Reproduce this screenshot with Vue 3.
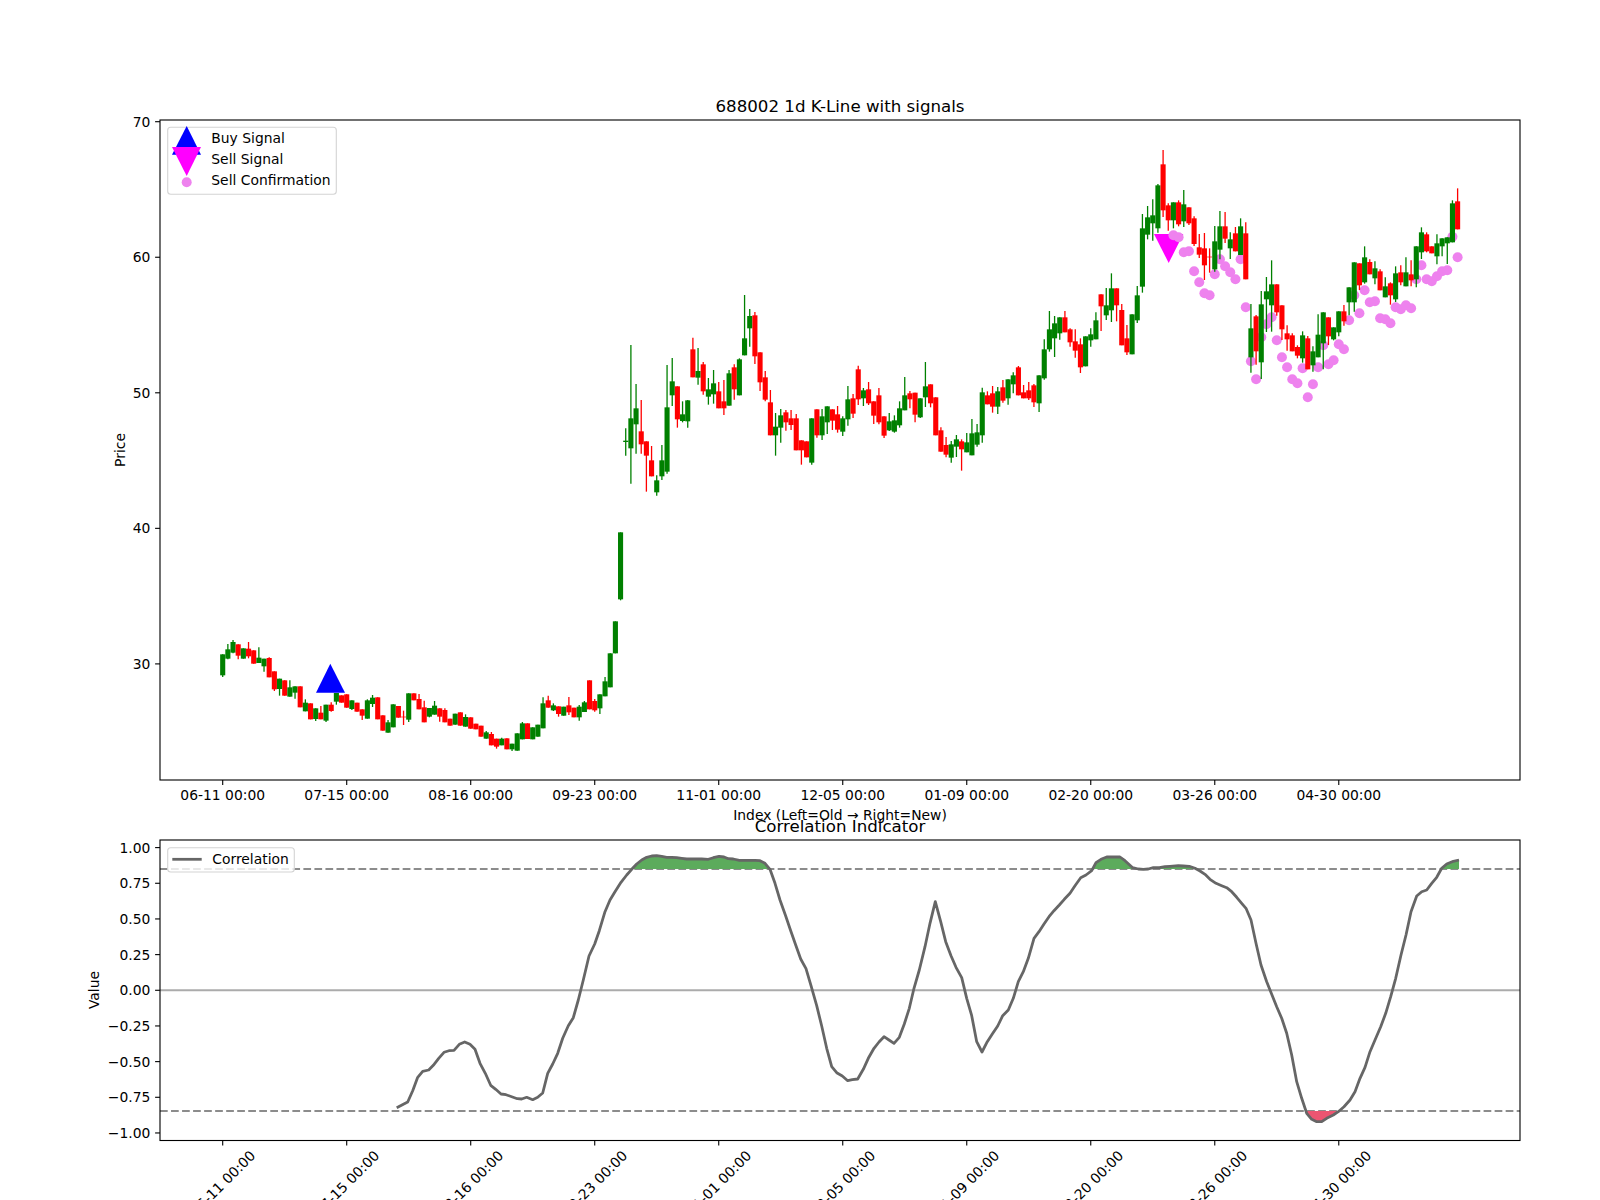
<script setup>
/**
 * K-line chart with signals and a correlation panel below
 */
const STEP = 5.167
const X0 = 222.7
const xAt = (i) => X0 + STEP * i

// candle rows: colour, body top, body bottom, wick top, wick bottom (3x px from y0)
const candleBlocks = [
  { y0: 620, rows: `g 103 166 103 171|g 88 116 72 118|g 66 98 60 100|r 73 107 73 118|g 85 116 85 116|r 86 109 66 115|r 91 131 91 131|g 113 129 82 129|g 116 139 116 155|r 114 172 112 172|r 154 208 154 213|g 176 207 176 227|r 181 227 181 227|g 202 230 181 230|g 199 218 199 236|r 199 262 199 262|g 248 274 238 274|r 250 298 250 298|g 265 297 265 303|r 278 298 258 298|g 254 302 254 306|r 254 273 247 275|g 219 245 219 254|r 226 248 226 248|r 223 263 223 263|g 241 267 241 270|r 248 275 248 275|r 268 287 268 300|g 241 296 238 296|g 233 252 225 261|r 232 298 232 298|r 286 332 286 332|g 307 338 300 338|g 253 322 253 322|r 258 293 258 293|r 290 292 272 315|g 220 299 220 306|r 220 241 220 241|r 237 268 222 268|r 262 307 242 307|g 264 290 264 292|g 257 284 243 284|r 265 290 265 305|r 270 307 265 307|r 296 317 296 317|g 281 314 281 314|r 277 317 277 317|g 291 320 283 320|r 292 326 292 326|r 311 328 311 328|r 317 350 317 350|g 337 356 333 356|r 342 376 336 376|r 356 380 356 386|g 356 376 353 376|r 355 388 355 388|g 371 388 371 393|g 340 392 340 392|g 310 358 306 358|r 310 357 310 357|g 322 358 322 358|g 314 350 314 350|g 250 325 232 325|r 241 263 227 263|g 256 271 250 273|r 259 282 259 290|g 260 287 260 287|r 256 277 231 285|r 263 292 263 292|g 260 292 255 302|g 247 276 243 276|r 181 268 181 268|r 243 271 237 275|g 223 265 223 282|g 184 229 171 229|g 100 202 100 202|g 4 100 4 100` },
  { y0: 520, rows: `g 37 238 37 241` },
  { y0: 300, rows: `g 422 426 385 467|g 355 445 135 551|g 325 373 252 461|r 394 433 300 461|r 424 467 424 575|r 481 529 438 529|g 541 577 526 587|g 481 529 435 540|g 322 515 195 521|g 244 286 174 318|r 259 358 259 383|g 343 363 304 367|g 301 364 300 383|r 148 232 113 232|g 213 233 144 254|r 193 274 186 284|g 268 290 234 314|g 250 283 210 311|r 274 325 246 325|r 304 325 240 345|g 220 317 210 317|r 202 268 193 299|g 178 286 175 286|g 115 166 -15 166|g 48 85 27 140|r 46 169 36 192|r 157 247 157 273|r 232 299 213 304|r 307 406 270 406|g 380 406 339 467|g 346 383 327 428|r 337 367 330 392|r 355 375 330 390|r 355 451 342 451|r 421 451 421 494|r 424 472 424 472|g 355 488 355 494|r 328 406 328 413|g 349 406 327 420|g 319 367 319 402|r 328 362 328 390|r 343 389 318 398|g 355 395 349 408|g 298 358 258 377|r 295 341 282 354|r 208 298 197 315|g 271 295 264 318|r 268 310 246 315|r 304 347 304 372|r 286 367 264 373|r 349 407 349 414|g 364 391 339 393|g 361 395 346 398|g 325 376 304 383|g 286 331 231 331|r 280 298 273 325|r 278 344 278 367|g 295 352 295 354|g 259 292 186 321|r 253 310 253 322|r 292 406 292 406|r 391 455 382 455|r 435 464 411 472|g 433 473 423 488|g 418 440 405 471` },
  { y0: 280, rows: `r 484 508 478 572|g 487 517 459 517|g 460 526 417 526|g 457 494 432 500|g 337 466 323 488|r 346 373 334 373|r 340 380 318 398|g 334 380 321 402|r 322 362 300 368|g 298 355 298 374|g 286 313 277 340|r 262 346 258 346|r 337 355 315 355|r 331 355 306 360|r 316 367 312 381|g 286 370 286 396|g 208 295 178 299|g 148 208 93 215|g 130 175 108 231|g 112 160 112 179|r 112 157 93 157|r 148 187 145 200|r 184 212 148 233|r 193 262 175 279|g 169 259 169 259|g 163 181 145 200|g 121 178 97 178|r 43 79 43 153|g 76 106 24 120|g 25 91 -20 126|r 25 76 25 124` },
  { y0: 140, rows: `r 510 616 492 616|r 595 637 555 645|g 523 643 523 643|g 466 541 438 549|g 265 440 222 458|g 232 284 198 298|g 226 250 178 302|g 136 265 132 278|r 73 211 30 231|r 196 241 190 272|g 187 241 187 265|r 187 253 181 259|g 193 244 150 261|r 202 250 202 255|r 235 312 229 318|r 322 344 282 354|r 325 376 279 420|r 350 352 325 398|g 304 388 258 395|g 259 329 213 358|r 259 296 216 309|g 298 325 277 357|r 280 334 261 334|g 259 345 235 345|r 280 418 247 418|g 565 652 492 698|r 529 634 525 674|g 493 667 453 717|g 454 478 411 576|g 433 496 361 575|r 433 517 433 527|r 496 568 496 600|r 580 598 556 632|r 586 634 580 634|r 621 647 616 655|g 586 655 574 668|r 595 688 588 688|g 634 676 619 695|g 584 652 523 652|g 517 610 517 688|r 532 589 532 615|g 562 598 562 601|g 514 577 514 589|r 514 544 495 557|g 442 487 442 526|g 367 487 367 515|r 370 436 370 450|g 352 427 319 431|r 366 403 358 403|g 385 415 364 433|r 394 451 388 451|g 439 472 412 472|r 430 466 427 494|g 400 478 379 486|r 397 427 376 436|g 397 439 352 439|r 403 421 361 439|g 319 418 319 442|g 277 337 262 357|r 283 334 277 337|r 319 340 319 340|g 310 349 283 373|g 295 319 295 349|g 292 310 292 372|g 190 307 181 307|r 184 268 145 268` }
]

const candles = candleBlocks.flatMap((block) =>
  block.rows.split('|').map((row) => {
    const [c, bt, bb, wt, wb] = row.split(' ')
    const py = (v) => block.y0 + Number(v) / 3
    return { color: c === 'g' ? '#008000' : '#ff0000', top: py(bt), h: Math.max(py(bb) - py(bt), 0.6), wt: py(wt), wb: py(wb) }
  })
)

// sell confirmation dots, one per candle from index 184
const dotYs = [286,292,337,334,394,427,460,466,403,358,379,397,418,358,502,664,718,592,553,532,601,652,682,718,730,685,772,733,682,616,673,661,613,628,541,466,520,451,487,484,535,538,550,502,508,496,505,418,376,418,424,409,394,391,290,352]
const dots = dotYs.map((v, i) => ({ x: xAt(184 + i), y: 140 + v / 3 }))

const priceTicks = [70, 60, 50, 40, 30].map((v, i) => ({ label: String(v), y: 121.7 + i * 135.55 }))
const valueTicks = ['1.00', '0.75', '0.50', '0.25', '0.00', '\u22120.25', '\u22120.50', '\u22120.75', '\u22121.00'].map((label, i) => ({ label, y: 847.6 + i * 35.67 }))
const dateTicks = ['06-11', '07-15', '08-16', '09-23', '11-01', '12-05', '01-09', '02-20', '03-26', '04-30'].map((d, i) => ({ label: `${d} 00:00`, x: xAt(i * 24) }))

// correlation curve traced in three pieces (x0, 3x px)
const curvePieces = [
  [380, [50,803,83,786,98,752,113,712,128,694,146,690,160,676,176,655,192,637,207,632,222,631,238,613,254,606,270,613,285,628,300,670,316,700,332,736,347,748,363,762,378,764,395,770,412,776,425,777,440,772,458,779,473,772,488,759,503,700,518,672,533,640,548,595,565,557,580,533,595,480,610,420,627,348,644,312,658,272,675,215,690,180,705,155,723,127,740,105,755,88,770,72,785,60,800,52,815,48,830,47,845,49,860,52,875,52,890,53,905,55,920,57,935,57,950,57,965,57,985,58,1000,53,1017,49,1032,51,1045,56,1060,57,1078,61,1095,61,1110,61,1125,61,1140,62,1155,70,1170,88]],
  [770, [15,130,30,180,47,228,62,272,77,315,92,357,108,386,124,440,140,497,155,558,170,625,185,680,200,698,217,708,233,722,247,719,263,717,280,688,295,655,312,625,327,606,342,590,357,600,372,610,388,592,403,552,418,505,432,445,448,390,465,320,480,250,496,185,512,245,527,305,543,347,558,382,575,413,590,475,605,527,620,605,636,636,652,605,667,582,683,558,698,527,715,510,730,475,745,425,760,395,775,355,792,295,807,275,822,252,837,230,852,212,868,195,883,178,900,160,915,137,932,113,948,105,965,92,978,68,993,58,1010,51,1025,51,1040,51]],
  [1120, [0,51,15,62,38,83,55,87,70,88,85,87,100,83,118,83,135,80,150,79,175,77,190,78,208,79,225,85,240,93,255,103,270,118,288,130,305,137,320,143,335,155,350,172,365,190,378,205,393,240,408,310,423,375,440,425,455,463,470,500,485,535,500,580,515,645,530,725,545,775,560,820,575,838,590,845,605,845,620,835,640,825,655,815,672,800,690,780,705,755,720,715,735,682,750,635,765,600,782,560,797,520,812,470,827,415,843,345,858,285,873,215,890,168,905,155,920,150,935,130,950,112,965,85,980,72,1000,64,1017,60]]
]

const curve = curvePieces.flatMap(([x0, pts]) => {
  const out = []
  for (let i = 0; i < pts.length; i += 2) out.push([x0 + pts[i] / 3, 840 + pts[i + 1] / 3])
  return out
})
const curvePoints = curve.map((p) => p.map((n) => n.toFixed(1)).join(',')).join(' ')
const first = curve[0]
const last = curve[curve.length - 1]
const UPPER = 869
const LOWER = 1111
const upperFill = `${curvePoints} ${last[0].toFixed(1)},${UPPER} ${first[0].toFixed(1)},${UPPER}`
const lowerFill = `${curvePoints} ${last[0].toFixed(1)},${LOWER} ${first[0].toFixed(1)},${LOWER}`
</script>

<template>
  <div class="figure">
    <svg class="chart" width="1600" height="1200" viewBox="0 0 1600 1200">
      <defs>
        <clipPath id="above-upper"><rect x="160" y="840" width="1360" :height="UPPER - 840" /></clipPath>
        <clipPath id="below-lower"><rect x="160" :y="LOWER" width="1360" :height="1140 - LOWER" /></clipPath>
      </defs>

      <!-- price panel -->
      <text class="title" x="840" y="111.7">688002 1d K-Line with signals</text>
      <polygon class="buy" points="330.3,663.7 316,692.7 345,692.7" />
      <polygon class="sell" points="1154,234 1183.3,234 1168.7,263" />
      <circle v-for="(d, i) in dots" :key="'d' + i" class="dot" :cx="d.x" :cy="d.y" r="5" />
      <g v-for="(c, i) in candles" :key="'c' + i">
        <line :x1="xAt(i)" :x2="xAt(i)" :y1="c.wt" :y2="c.wb" :stroke="c.color" stroke-width="1.3" />
        <rect :x="xAt(i) - 2.55" :y="c.top" width="5.1" :height="c.h" :fill="c.color" />
      </g>
      <rect class="spine" x="160" y="120" width="1360" height="660" />
      <g v-for="t in priceTicks" :key="'p' + t.label">
        <line class="tick" x1="155.1" x2="160" :y1="t.y" :y2="t.y" />
        <text class="label end" x="150.4" :y="t.y + 5">{{ t.label }}</text>
      </g>
      <g v-for="t in dateTicks" :key="'x' + t.label">
        <line class="tick" :x1="t.x" :x2="t.x" y1="780" y2="784.9" />
        <text class="label mid" :x="t.x" y="800.3">{{ t.label }}</text>
      </g>
      <text class="label mid" transform="translate(124.5,450) rotate(-90)">Price</text>
      <text class="label mid" x="840" y="820">Index (Left=Old → Right=New)</text>

      <g class="legend">
        <rect class="legend-box" x="167.7" y="127.3" width="168.6" height="67" rx="3" />
        <polygon class="buy" points="186.7,126 172,154.7 201,154.7" />
        <polygon class="sell" points="172,147 201,147 186.7,176" />
        <circle class="dot" cx="186.7" cy="182.3" r="5" />
        <text class="label" x="211.3" y="143.3">Buy Signal</text>
        <text class="label" x="211.3" y="164.3">Sell Signal</text>
        <text class="label" x="211.3" y="185.3">Sell Confirmation</text>
      </g>

      <!-- correlation panel -->
      <text class="title" x="840" y="831.7">Correlation Indicator</text>
      <line class="zero" x1="160" x2="1520" y1="990.3" y2="990.3" />
      <line class="limit" x1="160" x2="1520" :y1="UPPER" :y2="UPPER" />
      <line class="limit" x1="160" x2="1520" :y1="LOWER" :y2="LOWER" />
      <polygon class="fill-up" :points="upperFill" clip-path="url(#above-upper)" />
      <polygon class="fill-down" :points="lowerFill" clip-path="url(#below-lower)" />
      <polyline class="curve" :points="curvePoints" />
      <rect class="spine" x="160" y="840" width="1360" height="300.5" />
      <g v-for="t in valueTicks" :key="'v' + t.label">
        <line class="tick" x1="155.1" x2="160" :y1="t.y" :y2="t.y" />
        <text class="label end" x="150.4" :y="t.y + 5">{{ t.label }}</text>
      </g>
      <g v-for="t in dateTicks" :key="'r' + t.label">
        <line class="tick" :x1="t.x" :x2="t.x" y1="1140.5" y2="1145.4" />
        <text class="label mid" :transform="`translate(${t.x},1183) rotate(-45)`" y="5">{{ t.label }}</text>
      </g>
      <text class="label mid" transform="translate(98.5,990) rotate(-90)">Value</text>

      <g class="legend">
        <rect class="legend-box" x="167.7" y="847.7" width="126.6" height="24.3" rx="3" />
        <line class="legend-line" x1="172.3" x2="201.7" y1="859.3" y2="859.3" />
        <text class="label" x="212.3" y="864.3">Correlation</text>
      </g>
    </svg>
  </div>
</template>

<style scoped>
.figure {
  width: 1600px;
  height: 1200px;
  overflow: hidden;
  background: #fff;
}
.chart {
  display: block;
  font-family: "DejaVu Sans", sans-serif;
}
.title {
  font-size: 16.67px;
  text-anchor: middle;
  fill: #000;
}
.label {
  font-size: 13.89px;
  fill: #000;
}
.end {
  text-anchor: end;
}
.mid {
  text-anchor: middle;
}
.spine {
  fill: none;
  stroke: #000;
  stroke-width: 1.11;
}
.tick {
  stroke: #000;
  stroke-width: 1.11;
}
.buy {
  fill: #0000ff;
}
.sell {
  fill: #ff00ff;
}
.dot {
  fill: #ee82ee;
}
.legend-box {
  fill: rgba(255, 255, 255, 0.8);
  stroke: #d4d4d4;
  stroke-width: 1.11;
}
.legend-line {
  stroke: #666;
  stroke-width: 2.78;
}
.zero {
  stroke: #ababab;
  stroke-width: 2;
}
.limit {
  stroke: #8c8c8c;
  stroke-width: 2.08;
  stroke-dasharray: 7.7 3.33;
}
.fill-up {
  fill: #5cab5c;
}
.fill-down {
  fill: #ec5571;
}
.curve {
  fill: none;
  stroke: #666;
  stroke-width: 2.78;
  stroke-linejoin: round;
}
</style>
